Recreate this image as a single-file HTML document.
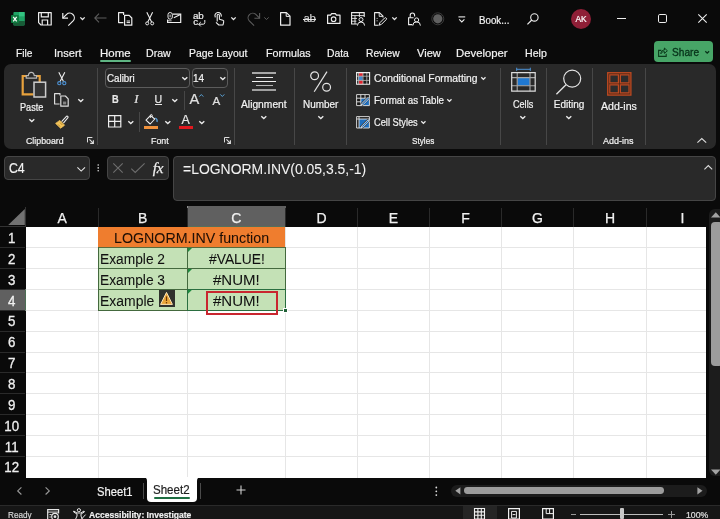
<!DOCTYPE html>
<html>
<head>
<meta charset="utf-8">
<title>Excel</title>
<style>
*{box-sizing:border-box;margin:0;padding:0}
html,body{width:720px;height:519px;overflow:hidden;background:#0a0a0a}
body{font-family:"Liberation Sans",sans-serif;color:#fff;position:relative}
.abs{position:absolute}
.t{position:absolute;white-space:nowrap;line-height:1;color:#f2f2f2;transform-origin:0 0;-webkit-text-stroke:0.2px currentColor}
#ribbon{position:absolute;left:4.1px;top:63.8px;width:711.8px;height:84.8px;background:#292929;border-radius:7px}
.sep{position:absolute;width:1px;background:#474747;top:68px;height:77px}
.box{position:absolute;background:#292929;border:1px solid #454545;border-radius:4px}
#grid{position:absolute;left:26px;top:227px;width:680px;height:250.5px;background:#fff;overflow:hidden}
.hl{position:absolute;left:0;width:680px;height:1px;background:#e6e6e6}
.vl{position:absolute;top:0;height:251px;width:1px;background:#e6e6e6}
.ch{position:absolute;top:207px;height:20px;color:#f0f0f0;font-size:14px;text-align:center;line-height:22px;-webkit-text-stroke:0.25px #f0f0f0}
.rh{position:absolute;left:0;width:23.4px;color:#f0f0f0;font-size:14.3px;text-align:center;line-height:22.4px;height:21px;transform:scaleX(0.93);-webkit-text-stroke:0.3px #f0f0f0}
.cell{position:absolute;font-size:13.5px;color:#111;line-height:21px;white-space:nowrap}
svg{position:absolute;overflow:visible}
</style>
</head>
<body>
<div id="app" style="position:absolute;left:0;top:0;width:720px;height:519px;will-change:transform">
<!-- TITLE BAR -->
<!-- excel logo -->
<svg style="left:11px;top:11.9px" width="14" height="14" viewBox="0 0 14 14">
<rect x="2.4" y="0" width="11.2" height="13.5" rx="0.9" fill="#21a366"/>
<rect x="8" y="0" width="5.6" height="4.6" fill="#33c481"/>
<rect x="2.4" y="4.6" width="5.6" height="4.4" fill="#107c41"/>
<rect x="8" y="4.6" width="5.6" height="4.4" fill="#21a366"/>
<rect x="2.4" y="9" width="11.2" height="4.5" rx="0.9" fill="#185c37"/>
<rect x="0" y="3" width="7.9" height="8" rx="0.8" fill="#107c41"/>
<path d="M2.2 4.8 L5.7 9.3 M5.7 4.8 L2.2 9.3" stroke="#fff" stroke-width="1.2"/>
</svg>
<!-- save -->
<svg style="left:38px;top:12.2px" width="14" height="14" viewBox="0 0 14 14"><path d="M0.6 0.6H13.2V13H3L0.6 10.6Z" fill="none" stroke="#eee" stroke-width="1.2" stroke-linejoin="round"/><path d="M3.3 0.6V4.9H10.3V0.6" fill="none" stroke="#eee" stroke-width="1.2"/><path d="M4.2 13V8H9.6V13" fill="none" stroke="#eee" stroke-width="1.2"/></svg>
<!-- undo -->
<svg style="left:62.3px;top:11.8px" width="14" height="14" viewBox="0 0 14 14"><path d="M0.8 1V6.2H6" fill="none" stroke="#eee" stroke-width="1.2"/><path d="M0.8 6.2 L4.6 2.4 A4.6 4.6 0 0 1 11.1 8.9 L6.3 13.6" fill="none" stroke="#eee" stroke-width="1.2"/></svg>
<svg style="left:80px;top:17px" width="5" height="3" viewBox="0 0 5 3"><path d="M0.3 0.4 L2.5 2.5 L4.7 0.4" fill="none" stroke="#e6e6e6" stroke-width="1.3"/></svg>
<!-- back arrow (disabled) -->
<svg style="left:94.4px;top:13.4px" width="13" height="10" viewBox="0 0 13 10"><path d="M12.5 5H0.8 M5 0.7 L0.8 5 L5 9.3" fill="none" stroke="#5c5c5c" stroke-width="1.1"/></svg>
<!-- copy -->
<svg style="left:118px;top:12px" width="15" height="14" viewBox="0 0 15 14"><path d="M5.4 10.6H0.6V0.6H5.6V3" fill="none" stroke="#eee" stroke-width="1.2" stroke-linejoin="round"/><path d="M6.6 3.4H11.2L13.8 6V13.2H6.6Z" fill="none" stroke="#eee" stroke-width="1.2" stroke-linejoin="round"/><path d="M8.6 9H12 M8.6 10.6H12" stroke="#eee" stroke-width="1"/></svg>
<!-- cut -->
<svg style="left:145px;top:12.4px" width="10" height="14" viewBox="0 0 10 14"><path d="M1.8 0.3 L6.6 10 M7.6 0.3 L2.8 10" stroke="#eee" stroke-width="1.1"/><circle cx="2.2" cy="11.4" r="1.5" fill="none" stroke="#eee" stroke-width="1"/><circle cx="7.2" cy="11.4" r="1.5" fill="none" stroke="#eee" stroke-width="1"/></svg>
<!-- email -->
<svg style="left:166.8px;top:12px" width="15" height="11" viewBox="0 0 15 11"><path d="M5.6 2.2H13.7V10.5H0.6V7.4" fill="none" stroke="#eee" stroke-width="1.2"/><path d="M6.8 5.8 L13.4 2.6" stroke="#eee" stroke-width="1.1"/><rect x="1" y="0.5" width="4.3" height="6.7" rx="2.1" fill="none" stroke="#eee" stroke-width="1"/><path d="M3.1 2.6V5.2" stroke="#eee" stroke-width="0.9"/><path d="M0.6 8.8H4.6" stroke="#eee" stroke-width="0.8"/></svg>
<!-- replace abc -->
<span class="t" style="left:193px;top:11.4px;font-size:9.8px;color:#eee;letter-spacing:-0.2px">ab</span>
<span class="t" style="left:193.3px;top:17.4px;font-size:9.8px;color:#eee">c</span>
<svg style="left:198px;top:19.5px" width="8" height="7" viewBox="0 0 8 7"><path d="M6.8 0V2.6A1.6 1.6 0 0 1 5.2 4.2H0.8 M2.8 2 L0.6 4.2 L2.8 6.4" fill="none" stroke="#eee" stroke-width="1"/></svg>
<!-- touch -->
<svg style="left:213.6px;top:12px" width="11" height="14" viewBox="0 0 11 14"><path d="M3.2 9.6V3.4A1.1 1.1 0 0 1 5.4 3.4V7.2L8.8 8.2A1.4 1.4 0 0 1 9.7 9.8L9 13H4.8L2 10.4" fill="none" stroke="#eee" stroke-width="1.1" stroke-linejoin="round"/><path d="M1.4 5.4A3.2 3.2 0 1 1 7.2 4.6" fill="none" stroke="#eee" stroke-width="1.1"/></svg>
<svg style="left:231.3px;top:17px" width="5" height="3" viewBox="0 0 5 3"><path d="M0.3 0.4 L2.5 2.5 L4.7 0.4" fill="none" stroke="#e6e6e6" stroke-width="1.3"/></svg>
<!-- redo (disabled) -->
<svg style="left:246.6px;top:11.8px" width="14" height="14" viewBox="0 0 14 14"><path d="M12.6 1V6.2H7.4" fill="none" stroke="#5c5c5c" stroke-width="1.1"/><path d="M12.6 6.2 L8.8 2.4 A4.6 4.6 0 0 0 2.3 8.9 L7.1 13.6" fill="none" stroke="#5c5c5c" stroke-width="1.1"/></svg>
<svg style="left:264.4px;top:17px" width="5" height="3" viewBox="0 0 5 3"><path d="M0.3 0.4 L2.5 2.5 L4.7 0.4" fill="none" stroke="#5c5c5c" stroke-width="1"/></svg>
<!-- new doc -->
<svg style="left:280px;top:12px" width="11" height="14" viewBox="0 0 11 14"><path d="M0.6 0.6H6.4L10 4.2V13.2H0.6Z" fill="none" stroke="#eee" stroke-width="1.2" stroke-linejoin="round"/><path d="M6.2 0.8V4.4H9.8" fill="none" stroke="#eee" stroke-width="1"/></svg>
<!-- strikethrough ab -->
<span class="t" style="left:303.6px;top:12.6px;font-size:11.4px;color:#cfcfcf;letter-spacing:-0.4px">ab</span>
<div class="abs" style="left:302.5px;top:19.3px;width:13.2px;height:1px;background:#e6e6e6"></div>
<!-- camera -->
<svg style="left:326.5px;top:12.8px" width="14" height="11" viewBox="0 0 14 11"><path d="M0.6 2.2H3.6L4.6 0.7H8.4L9.4 2.2H13V10.4H0.6Z" fill="none" stroke="#eee" stroke-width="1.2" stroke-linejoin="round"/><circle cx="6.6" cy="6.2" r="2.3" fill="none" stroke="#eee" stroke-width="1.1"/></svg>
<!-- table person -->
<svg style="left:351px;top:12px" width="14" height="14" viewBox="0 0 14 14"><path d="M6 12H0.6V0.6H13.2V5" fill="none" stroke="#eee" stroke-width="1.1"/><path d="M0.6 3.6H13.2 M0.6 6.4H6 M0.6 9.2H5.4 M4 3.6V12 M8.4 0.6V5" stroke="#eee" stroke-width="0.9"/><circle cx="10" cy="7.6" r="2" fill="none" stroke="#eee" stroke-width="1"/><path d="M6.4 13.6A3.6 3.6 0 0 1 13.6 13.6" fill="none" stroke="#eee" stroke-width="1"/></svg>
<!-- doc pen -->
<svg style="left:374px;top:12px" width="13" height="14" viewBox="0 0 13 14"><path d="M4.6 13.2H0.6V0.6H5.4L9 4.2V5.4" fill="none" stroke="#eee" stroke-width="1.1" stroke-linejoin="round"/><path d="M5.2 0.8V4.4H8.8" fill="none" stroke="#eee" stroke-width="0.9"/><path d="M5.2 13.2 L5.8 10.8 L10.6 6 A1 1 0 0 1 12.2 7.6 L7.4 12.4 Z" fill="none" stroke="#eee" stroke-width="1" stroke-linejoin="round"/><path d="M2.6 6.4H3.6 M2.6 8.8H3.6" stroke="#eee" stroke-width="0.9"/></svg>
<svg style="left:391.5px;top:17px" width="5" height="3" viewBox="0 0 5 3"><path d="M0.3 0.4 L2.5 2.5 L4.7 0.4" fill="none" stroke="#e6e6e6" stroke-width="1.3"/></svg>
<!-- lock person -->
<svg style="left:407.7px;top:12px" width="13" height="14" viewBox="0 0 13 14"><path d="M4.4 12.6H0.6V5.8H5.6" fill="none" stroke="#eee" stroke-width="1.1"/><path d="M2.2 5.8V3.2A2.2 2.2 0 0 1 6.6 3.2V4.6" fill="none" stroke="#eee" stroke-width="1.1"/><circle cx="8.6" cy="8" r="2.1" fill="none" stroke="#eee" stroke-width="1"/><path d="M4.8 13.6A3.8 3.8 0 0 1 12.4 13.6" fill="none" stroke="#eee" stroke-width="1"/></svg>
<!-- gray record circle -->
<svg style="left:430.5px;top:12px" width="14" height="14" viewBox="0 0 14 14"><circle cx="6.8" cy="6.8" r="6" fill="none" stroke="#3b3b3b" stroke-width="1"/><circle cx="6.8" cy="6.8" r="4.6" fill="#606060"/></svg>
<!-- customize QAT -->
<svg style="left:458px;top:15.6px" width="8" height="7" viewBox="0 0 8 7"><path d="M0.4 0.9H7.2" stroke="#eee" stroke-width="1.1"/><path d="M1.2 3.4 L3.8 5.9 L6.4 3.4" fill="none" stroke="#eee" stroke-width="1.1"/></svg>
<!-- search -->
<svg style="left:527.4px;top:13.3px" width="12" height="12" viewBox="0 0 12 12"><circle cx="7.4" cy="4.4" r="3.7" fill="none" stroke="#eee" stroke-width="1.1"/><path d="M4.8 7 L0.4 11.4" stroke="#eee" stroke-width="1.2"/></svg>
<!-- avatar -->
<div class="abs" style="left:571px;top:9px;width:20px;height:20px;border-radius:10px;background:#8f1f37"></div>
<span class="t" style="left:575.4px;top:15.2px;font-size:8.4px;color:#fff">AK</span>
<!-- window controls -->
<div class="abs" style="left:617.3px;top:18.3px;width:9px;height:1px;background:#eee"></div>
<div class="abs" style="left:657.8px;top:14.4px;width:9px;height:8.8px;border:1.1px solid #eee;border-radius:1.8px"></div>
<svg style="left:698.2px;top:14.3px" width="9" height="9" viewBox="0 0 9 9"><path d="M0.3 0.3 L8.7 8.7 M8.7 0.3 L0.3 8.7" stroke="#eee" stroke-width="1.1"/></svg>

<!-- TABS -->
<div class="abs" style="left:99.5px;top:60.2px;width:31px;height:1.6px;background:#5fb583;border-radius:1px"></div>
<div class="abs" style="left:654.2px;top:41px;width:59px;height:21px;background:#47a567;border-radius:4px"></div>
<!-- RIBBON -->
<div id="ribbon"></div>
<div class="sep" style="left:96.5px"></div>
<div class="sep" style="left:233.6px"></div>
<div class="sep" style="left:293.9px"></div>
<div class="sep" style="left:345.5px"></div>
<div class="sep" style="left:499.5px"></div>
<div class="sep" style="left:546.2px"></div>
<div class="sep" style="left:591.7px"></div>
<div class="sep" style="left:644.5px"></div>
<!-- paste -->
<svg style="left:21px;top:71px" width="26" height="27" viewBox="0 0 26 27">
<path d="M12.4 23.4H1.7V5H18.7V11" fill="none" stroke="#e8a23d" stroke-width="2.2"/>
<path d="M5.2 7.2V4.6H7.4C7.6 0.2 13 0.2 13.2 4.6H15.6V7.2Z" fill="#292929" stroke="#b8b8b8" stroke-width="1.2" stroke-linejoin="round"/>
<rect x="13" y="11.2" width="11.6" height="14.8" fill="#333" stroke="#cdcdcd" stroke-width="1.5"/>
</svg>
<svg style="left:28.7px;top:118.9px" width="6" height="3" viewBox="0 0 6 3"><path d="M0.3 0.3 L2.8 2.6 L5.3 0.3" fill="none" stroke="#ececec" stroke-width="1.35"/></svg>
<!-- cut -->
<svg style="left:56.6px;top:71.7px" width="10" height="14" viewBox="0 0 10 14"><path d="M1.8 0.3 L6.5 9.6 M7.8 0.3 L3.1 9.6" stroke="#eee" stroke-width="1.1"/><circle cx="2.3" cy="11.2" r="1.6" fill="none" stroke="#4d93d6" stroke-width="1.1"/><circle cx="7.3" cy="11.2" r="1.6" fill="none" stroke="#4d93d6" stroke-width="1.1"/></svg>
<!-- copy -->
<svg style="left:53.7px;top:93px" width="15" height="14" viewBox="0 0 15 14"><path d="M5.6 11H0.6V0.6H6V2.4" fill="none" stroke="#ddd" stroke-width="1.2" stroke-linejoin="round"/><path d="M6.8 3H11.4L14.2 5.8V13.2H6.8Z" fill="none" stroke="#ddd" stroke-width="1.2" stroke-linejoin="round"/><path d="M9 9.2H12.2 M9 10.8H12.2" stroke="#aaa" stroke-width="1"/></svg>
<svg style="left:78.2px;top:98.9px" width="6" height="3" viewBox="0 0 6 3"><path d="M0.3 0.3 L2.8 2.6 L5.3 0.3" fill="none" stroke="#ececec" stroke-width="1.35"/></svg>
<!-- format painter -->
<svg style="left:54.7px;top:115px" width="14" height="14" viewBox="0 0 14 14"><path d="M6.6 6.6 L11.6 1.2 A1.1 1.1 0 0 1 13 2.6 L8.4 8.2" fill="none" stroke="#eee" stroke-width="1.1"/><path d="M4.8 5.4 L9.6 10.2 L5.6 13.2 L0.6 8.4 Z" fill="#f2c35a" stroke="#f2c35a" stroke-width="0.8" stroke-linejoin="round"/><path d="M3 9.4 L5.2 11.6 M5 7.6 L7.4 10" stroke="#a87818" stroke-width="0.7"/></svg>
<!-- dialog launchers -->
<svg style="left:87.4px;top:137.2px" width="7" height="7" viewBox="0 0 7 7"><path d="M0.5 5.4V0.5H5.4" fill="none" stroke="#ddd" stroke-width="1"/><path d="M2.4 2.4 L6.2 6.2 M6.4 3.2V6.4H3.2" fill="none" stroke="#ddd" stroke-width="1.1"/></svg>
<svg style="left:224.2px;top:137.2px" width="7" height="7" viewBox="0 0 7 7"><path d="M0.5 5.4V0.5H5.4" fill="none" stroke="#ddd" stroke-width="1"/><path d="M2.4 2.4 L6.2 6.2 M6.4 3.2V6.4H3.2" fill="none" stroke="#ddd" stroke-width="1.1"/></svg>
<!-- font boxes -->
<div class="abs" style="left:104.5px;top:68.2px;width:85.2px;height:19.6px;border:1px solid #5c5c5c;border-radius:4px;background:#272727"></div>
<div class="abs" style="left:191.6px;top:68.2px;width:36.6px;height:19.6px;border:1px solid #5c5c5c;border-radius:4px;background:#272727"></div>
<svg style="left:182px;top:77.3px" width="6" height="3" viewBox="0 0 6 3"><path d="M0.3 0.3 L2.8 2.6 L5.3 0.3" fill="none" stroke="#ececec" stroke-width="1.35"/></svg>
<svg style="left:219.8px;top:77.3px" width="6" height="3" viewBox="0 0 6 3"><path d="M0.3 0.3 L2.8 2.6 L5.3 0.3" fill="none" stroke="#ececec" stroke-width="1.35"/></svg>
<!-- B I U -->
<span class="t" style="left:112.2px;top:93.7px;font-size:11px;font-weight:700;color:#e8e8e8;transform:scaleX(0.84)">B</span>
<span class="t" style="left:134.2px;top:92.6px;font-size:12.6px;font-style:italic;font-family:'Liberation Serif',serif;color:#e8e8e8">I</span>
<span class="t" style="left:154.5px;top:93.7px;font-size:10.6px;color:#e8e8e8">U</span>
<div class="abs" style="left:154.5px;top:104px;width:7.6px;height:1px;background:#e8e8e8"></div>
<svg style="left:172px;top:99px" width="6" height="3" viewBox="0 0 6 3"><path d="M0.3 0.3 L2.8 2.6 L5.3 0.3" fill="none" stroke="#ececec" stroke-width="1.35"/></svg>
<div class="abs" style="left:183.6px;top:90.5px;width:1px;height:19px;background:#474747"></div>
<!-- grow / shrink font -->
<span class="t" style="left:189.4px;top:92.2px;font-size:14.6px;color:#e0e0e0">A</span>
<svg style="left:199px;top:94px" width="5" height="3" viewBox="0 0 5 3"><path d="M0.3 2.6 L2.3 0.5 L4.3 2.6" fill="none" stroke="#5aa2d6" stroke-width="1"/></svg>
<span class="t" style="left:212.6px;top:94.8px;font-size:11.6px;color:#e0e0e0">A</span>
<svg style="left:220.4px;top:94px" width="5" height="3" viewBox="0 0 5 3"><path d="M0.3 0.4 L2.3 2.5 L4.3 0.4" fill="none" stroke="#5aa2d6" stroke-width="1"/></svg>
<!-- borders -->
<svg style="left:108px;top:115.4px" width="14" height="13" viewBox="0 0 14 13"><path d="M0.6 0.6H12.8V12H0.6Z M6.7 0.6V12 M0.6 6.3H12.8" fill="none" stroke="#eee" stroke-width="1.2"/></svg>
<svg style="left:128px;top:121px" width="6" height="3" viewBox="0 0 6 3"><path d="M0.3 0.3 L2.8 2.6 L5.3 0.3" fill="none" stroke="#ececec" stroke-width="1.35"/></svg>
<div class="abs" style="left:139.3px;top:112px;width:1px;height:20px;background:#474747"></div>
<!-- fill color -->
<svg style="left:145.4px;top:114.4px" width="14" height="11" viewBox="0 0 14 11"><path d="M5.4 1.6 L9.8 5 L5.2 10 L1 6.2 Z" fill="none" stroke="#eee" stroke-width="1.1" stroke-linejoin="round"/><path d="M5.4 4 V1 A1 1 0 0 1 7.2 1 V3" fill="none" stroke="#eee" stroke-width="0.9"/><path d="M10.2 4 C11.8 4.6 12.4 6.2 12 8" fill="none" stroke="#5a9fd8" stroke-width="1.3"/></svg>
<div class="abs" style="left:144.2px;top:125.6px;width:14.1px;height:3.1px;background:#f0923c"></div>
<svg style="left:164.6px;top:121px" width="6" height="3" viewBox="0 0 6 3"><path d="M0.3 0.3 L2.8 2.6 L5.3 0.3" fill="none" stroke="#ececec" stroke-width="1.35"/></svg>
<!-- font color -->
<span class="t" style="left:181.5px;top:113.7px;font-size:12.4px;color:#e8e8e8">A</span>
<div class="abs" style="left:178.9px;top:125.6px;width:14.1px;height:3.1px;background:#e0191f"></div>
<svg style="left:199px;top:121px" width="6" height="3" viewBox="0 0 6 3"><path d="M0.3 0.3 L2.8 2.6 L5.3 0.3" fill="none" stroke="#ececec" stroke-width="1.35"/></svg>
<!-- alignment icon -->
<div class="abs" style="left:252px;top:72.2px;width:24.2px;height:1.4px;background:#a8a8a8"></div>
<div class="abs" style="left:255.6px;top:76.9px;width:17.2px;height:1.2px;background:#e8e8e8"></div>
<div class="abs" style="left:252px;top:80.8px;width:24.2px;height:1.2px;background:#f0f0f0"></div>
<div class="abs" style="left:255.6px;top:85.2px;width:17.2px;height:1.3px;background:#b4b4b4"></div>
<div class="abs" style="left:252px;top:89.3px;width:24.2px;height:1.5px;background:#a0a0a0"></div>
<svg style="left:261px;top:116px" width="6" height="3" viewBox="0 0 6 3"><path d="M0.3 0.3 L2.8 2.6 L5.3 0.3" fill="none" stroke="#ececec" stroke-width="1.35"/></svg>
<!-- number icon (percent) -->
<svg style="left:310px;top:71.4px" width="22" height="22" viewBox="0 0 22 22"><circle cx="4.6" cy="4.8" r="3.9" fill="none" stroke="#e4e4e4" stroke-width="1.2"/><circle cx="16.6" cy="16.2" r="3.9" fill="none" stroke="#e4e4e4" stroke-width="1.2"/><path d="M17 0.6 L4.2 20.8" stroke="#e4e4e4" stroke-width="1.2"/></svg>
<svg style="left:318px;top:116px" width="6" height="3" viewBox="0 0 6 3"><path d="M0.3 0.3 L2.8 2.6 L5.3 0.3" fill="none" stroke="#ececec" stroke-width="1.35"/></svg>
<!-- conditional formatting icon -->
<svg style="left:356px;top:71.6px" width="14" height="13" viewBox="0 0 14 13"><rect x="0.6" y="0.6" width="13" height="11.6" fill="#1c1c1c"/><rect x="3" y="0.6" width="4" height="3.6" fill="#e0232d"/><rect x="2.4" y="4.2" width="4.2" height="4.2" fill="#3f86cf"/><rect x="3" y="8.4" width="4" height="3.8" fill="#e0232d"/><path d="M2.6 0.6V12.2 M7 0.6V12.2 M10.8 0.6V12.2 M0.6 4.2H13.6 M0.6 8.4H13.6" fill="none" stroke="#bdbdbd" stroke-width="0.8"/><path d="M0.6 0.6H13.6V12.2H0.6Z" fill="none" stroke="#f0f0f0" stroke-width="1.1"/></svg>
<svg style="left:481px;top:76.9px" width="5" height="3" viewBox="0 0 5 3"><path d="M0.3 0.3 L2.4 2.4 L4.5 0.3" fill="none" stroke="#ececec" stroke-width="1.3"/></svg>
<!-- format as table icon -->
<svg style="left:356px;top:94.3px" width="14" height="12" viewBox="0 0 14 12"><rect x="0.6" y="0.6" width="12.8" height="11" fill="#1a1a1a"/><rect x="4.8" y="4.2" width="8.6" height="7.4" fill="#1f6fbf"/><path d="M0.6 0.6H13.4V11.6H0.6Z M4.8 0.6V11.6 M9 0.6V4.2 M0.6 4.2H13.4 M0.6 7.8H4.8" fill="none" stroke="#e4e4e4" stroke-width="0.9"/><path d="M5.2 11.2 L12.8 3.6" stroke="#2a2a2a" stroke-width="3.2"/><path d="M5 11.4 L6 9.4 L12 3.4 L13.2 4.6 L7.2 10.6 Z" fill="#1f6fbf" stroke="#f0f0f0" stroke-width="0.8" stroke-linejoin="round"/></svg>
<svg style="left:447.3px;top:98.7px" width="5" height="3" viewBox="0 0 5 3"><path d="M0.3 0.3 L2.4 2.4 L4.5 0.3" fill="none" stroke="#ececec" stroke-width="1.3"/></svg>
<!-- cell styles icon -->
<svg style="left:356px;top:116px" width="14" height="13" viewBox="0 0 14 13"><rect x="0.6" y="0.6" width="12.8" height="11.4" fill="#1a1a1a"/><rect x="3" y="3" width="10.4" height="9" fill="#1f6fbf"/><path d="M0.6 0.6H13.4V12H0.6Z M0.6 3H13.4 M3 0.6V12" fill="none" stroke="#e4e4e4" stroke-width="0.9"/><path d="M5.2 11.6 L12.8 4" stroke="#2a2a2a" stroke-width="3.2"/><path d="M5 11.8 L6 9.8 L12 3.8 L13.2 5 L7.2 11 Z" fill="#1f6fbf" stroke="#f0f0f0" stroke-width="0.8" stroke-linejoin="round"/></svg>
<svg style="left:420.6px;top:120.8px" width="5" height="3" viewBox="0 0 5 3"><path d="M0.3 0.3 L2.4 2.4 L4.5 0.3" fill="none" stroke="#ececec" stroke-width="1.3"/></svg>
<!-- cells icon -->
<svg style="left:511px;top:68px" width="25" height="25" viewBox="0 0 25 25"><rect x="6.4" y="9.8" width="12.4" height="7.8" fill="#1f78d1"/><path d="M6.2 4.7V23.2 M19 4.7V23.2 M0.7 9.6H24.2 M0.7 17.7H24.2" fill="none" stroke="#a8a8a8" stroke-width="1.1"/><path d="M0.7 4.7H24.2V23.2H0.7Z" fill="none" stroke="#dcdcdc" stroke-width="1.2"/><path d="M5.7 1.3H19.3 M5.7 -0.3V2.9 M19.3 -0.3V2.9" stroke="#4d93d6" stroke-width="1"/></svg>
<svg style="left:520.4px;top:115.6px" width="6" height="3" viewBox="0 0 6 3"><path d="M0.3 0.3 L2.8 2.6 L5.3 0.3" fill="none" stroke="#ececec" stroke-width="1.35"/></svg>
<!-- editing icon -->
<svg style="left:556px;top:69.4px" width="26" height="26" viewBox="0 0 26 26"><circle cx="16.2" cy="9.6" r="8.5" fill="none" stroke="#e4e4e4" stroke-width="1.2"/><path d="M10 15.8 L0.4 25.2" stroke="#e4e4e4" stroke-width="1.3"/></svg>
<svg style="left:566px;top:115.6px" width="6" height="3" viewBox="0 0 6 3"><path d="M0.3 0.3 L2.8 2.6 L5.3 0.3" fill="none" stroke="#ececec" stroke-width="1.35"/></svg>
<!-- add-ins icon -->
<svg style="left:606.7px;top:72px" width="25" height="24" viewBox="0 0 25 24"><rect x="0.7" y="0.7" width="23.2" height="22.4" fill="#4f2616" stroke="#bd4a22" stroke-width="1.3"/><path d="M2.8 2.8H11.4V10.8H2.8Z M13.4 2.8H22V10.8H13.4Z M2.8 12.8H11.4V20.9H2.8Z M13.4 12.8H22V20.9H13.4Z" fill="#2c2c2c" stroke="#bd4a22" stroke-width="1.2"/></svg>
<!-- collapse ribbon chevron -->
<svg style="left:697.4px;top:138.4px" width="10" height="5" viewBox="0 0 10 5"><path d="M0.4 4.6 L4.8 0.5 L9.2 4.6" fill="none" stroke="#ddd" stroke-width="1.1"/></svg>
<!-- share icon + chevron -->
<svg style="left:658.3px;top:46.6px" width="10" height="10" viewBox="0 0 10 10"><path d="M3.4 3.4H0.6V9.4H8.2V6.8" fill="none" stroke="#0b3d1c" stroke-width="1.1"/><path d="M2.8 6.8C3 4.4 4.6 3 6.4 3V1L9.4 3.8L6.4 6.4V4.6C5 4.6 3.8 5.2 2.8 6.8Z" fill="none" stroke="#0b3d1c" stroke-width="1" stroke-linejoin="round"/></svg>
<svg style="left:705px;top:50.5px" width="5" height="3" viewBox="0 0 5 3"><path d="M0.3 0.3 L2.2 2.2 L4.1 0.3" fill="none" stroke="#07331a" stroke-width="1.3"/></svg>

<!-- FORMULA BAR -->
<div class="box" style="left:4px;top:156px;width:86px;height:24px"></div>
<div class="box" style="left:107px;top:156px;width:62px;height:24px"></div>
<div class="box" style="left:172.5px;top:156px;width:543.5px;height:45px"></div>
<svg style="left:77px;top:166.6px" width="9" height="5" viewBox="0 0 9 5"><path d="M0.4 0.4 L4.2 4.1 L8 0.4" fill="none" stroke="#e6e6e6" stroke-width="1.1"/></svg>
<svg style="left:97.2px;top:164.4px" width="3" height="8" viewBox="0 0 3 8"><circle cx="1.2" cy="1" r="0.8" fill="#ddd"/><circle cx="1.2" cy="3.9" r="0.8" fill="#ddd"/><circle cx="1.2" cy="6.8" r="0.8" fill="#ddd"/></svg>
<svg style="left:112.5px;top:163px" width="10" height="10" viewBox="0 0 10 10"><path d="M0.3 0.3 L9.7 9.7 M9.7 0.3 L0.3 9.7" stroke="#6e6e6e" stroke-width="1.1"/></svg>
<svg style="left:130.8px;top:163px" width="14" height="10" viewBox="0 0 14 10"><path d="M0.3 5.6 L4.2 9.4 L13.6 0.4" fill="none" stroke="#6e6e6e" stroke-width="1.1"/></svg>
<span class="t" style="left:152.8px;top:160.3px;font-size:15.2px;font-style:italic;font-weight:400;font-family:'Liberation Serif',serif;color:#f0f0f0;letter-spacing:-0.2px;-webkit-text-stroke:0.25px #f0f0f0">fx</span>
<svg style="left:704px;top:164.6px" width="9" height="5" viewBox="0 0 9 5"><path d="M0.4 4.4 L4.3 0.5 L8.2 4.4" fill="none" stroke="#ddd" stroke-width="1.1"/></svg>

<!-- GRID -->
<div class="abs" style="left:0;top:206px;width:706px;height:21px;background:#0a0a0a"></div>
<svg style="left:7.5px;top:209.2px" width="17" height="16" viewBox="0 0 17 16"><path d="M16.8 0 L16.8 16 L0.2 16 Z" fill="#727272"/></svg>
<div class="abs" style="left:187px;top:206.4px;width:98.6px;height:20.4px;background:#606060;border-bottom:0.8px solid #56705a;border-left:1px solid #8c8c8c"></div>
<div class="abs" style="left:0;top:289.15px;width:25.7px;height:21.45px;background:#606060;border-right:0.9px solid #4c6e54;border-top:1px solid #7c7c7c;border-bottom:1px solid #9a9a9a"></div>
<div class="ch" style="left:26px;width:72.5px">A</div>
<div class="ch" style="left:98.5px;width:88.5px">B</div>
<div class="ch" style="left:187px;width:98.5px">C</div>
<div class="ch" style="left:285.5px;width:72.0px">D</div>
<div class="ch" style="left:357.5px;width:72.0px">E</div>
<div class="ch" style="left:429.5px;width:72.0px">F</div>
<div class="ch" style="left:501.5px;width:72.0px">G</div>
<div class="ch" style="left:573.5px;width:73.0px">H</div>
<div class="ch" style="left:646.5px;width:72.0px">I</div>
<div class="abs" style="left:98.0px;top:208px;width:1px;height:19px;background:#2a2a2a"></div>
<div class="abs" style="left:186.5px;top:208px;width:1px;height:19px;background:#2a2a2a"></div>
<div class="abs" style="left:285.0px;top:208px;width:1px;height:19px;background:#2a2a2a"></div>
<div class="abs" style="left:357.0px;top:208px;width:1px;height:19px;background:#2a2a2a"></div>
<div class="abs" style="left:429.0px;top:208px;width:1px;height:19px;background:#2a2a2a"></div>
<div class="abs" style="left:501.0px;top:208px;width:1px;height:19px;background:#2a2a2a"></div>
<div class="abs" style="left:573.0px;top:208px;width:1px;height:19px;background:#2a2a2a"></div>
<div class="abs" style="left:646.0px;top:208px;width:1px;height:19px;background:#2a2a2a"></div>
<div class="abs" style="left:25px;top:207px;width:1px;height:20px;background:#333"></div><div class="abs" style="left:0;top:226.3px;width:26px;height:1px;background:#333"></div>
<div id="grid">
<div class="hl" style="top:20.35px"></div>
<div class="hl" style="top:41.20px"></div>
<div class="hl" style="top:62.05px"></div>
<div class="hl" style="top:82.90px"></div>
<div class="hl" style="top:103.75px"></div>
<div class="hl" style="top:124.60px"></div>
<div class="hl" style="top:145.45px"></div>
<div class="hl" style="top:166.30px"></div>
<div class="hl" style="top:187.15px"></div>
<div class="hl" style="top:208.00px"></div>
<div class="hl" style="top:228.85px"></div>
<div class="vl" style="left:72.0px"></div>
<div class="vl" style="left:160.5px"></div>
<div class="vl" style="left:259.0px"></div>
<div class="vl" style="left:331.0px"></div>
<div class="vl" style="left:403.0px"></div>
<div class="vl" style="left:475.0px"></div>
<div class="vl" style="left:547.0px"></div>
<div class="vl" style="left:620.0px"></div>
</div>
<div class="rh" style="top:227.00px">1</div>
<div class="rh" style="top:247.85px">2</div>
<div class="abs" style="left:0;top:247.35px;width:25px;height:1px;background:#2a2a2a"></div>
<div class="rh" style="top:268.70px">3</div>
<div class="abs" style="left:0;top:268.20px;width:25px;height:1px;background:#2a2a2a"></div>
<div class="rh" style="top:289.55px">4</div>
<div class="abs" style="left:0;top:289.05px;width:25px;height:1px;background:#2a2a2a"></div>
<div class="rh" style="top:310.40px">5</div>
<div class="abs" style="left:0;top:309.90px;width:25px;height:1px;background:#2a2a2a"></div>
<div class="rh" style="top:331.25px">6</div>
<div class="abs" style="left:0;top:330.75px;width:25px;height:1px;background:#2a2a2a"></div>
<div class="rh" style="top:352.10px">7</div>
<div class="abs" style="left:0;top:351.60px;width:25px;height:1px;background:#2a2a2a"></div>
<div class="rh" style="top:372.95px">8</div>
<div class="abs" style="left:0;top:372.45px;width:25px;height:1px;background:#2a2a2a"></div>
<div class="rh" style="top:393.80px">9</div>
<div class="abs" style="left:0;top:393.30px;width:25px;height:1px;background:#2a2a2a"></div>
<div class="rh" style="top:414.65px">10</div>
<div class="abs" style="left:0;top:414.15px;width:25px;height:1px;background:#2a2a2a"></div>
<div class="rh" style="top:435.50px">11</div>
<div class="abs" style="left:0;top:435.00px;width:25px;height:1px;background:#2a2a2a"></div>
<div class="rh" style="top:456.35px">12</div>
<div class="abs" style="left:0;top:455.85px;width:25px;height:1px;background:#2a2a2a"></div>
<div class="abs" style="left:98px;top:227px;width:187.3px;height:21px;background:#ef7d2e"></div>
<div class="abs" style="left:98px;top:247.6px;width:187.6px;height:62.6px;background:#c4e1b6"></div>
<!-- cell borders (dark green) -->
<div class="abs" style="left:98px;top:247.4px;width:188px;height:1px;background:#5a6a3c"></div>
<div class="abs" style="left:98px;top:268.3px;width:188px;height:1px;background:#44693e"></div>
<div class="abs" style="left:98px;top:289.1px;width:188px;height:1px;background:#44693e"></div>
<div class="abs" style="left:98px;top:309.7px;width:89px;height:1px;background:#44693e"></div>
<div class="abs" style="left:97.8px;top:247.4px;width:1px;height:63px;background:#44693e"></div>
<div class="abs" style="left:186.9px;top:247.4px;width:1px;height:63px;background:#44693e"></div>
<div class="abs" style="left:285.2px;top:247.4px;width:1px;height:63px;background:#44693e"></div>
<!-- selection C4 -->
<div class="abs" style="left:186.6px;top:288.9px;width:99.4px;height:21.9px;border:1.2px solid #2a6e40"></div>
<div class="abs" style="left:282.8px;top:308px;width:3.4px;height:3.3px;background:#1f5f36;border:0.5px solid #fff;box-sizing:content-box"></div>
<!-- error indicators -->
<svg style="left:187.6px;top:248.3px" width="5" height="5" viewBox="0 0 5 5"><path d="M0 0H4L0 4Z" fill="#1d8a3e"/></svg>
<svg style="left:187.6px;top:269.1px" width="5" height="5" viewBox="0 0 5 5"><path d="M0 0H4L0 4Z" fill="#1d8a3e"/></svg>
<svg style="left:187.9px;top:290.3px" width="5" height="5" viewBox="0 0 5 5"><path d="M0 0H3.8L0 3.8Z" fill="#1d8a3e"/></svg>
<!-- warning icon -->
<div class="abs" style="left:159.2px;top:290px;width:15.9px;height:16.5px;background:#30322e"></div>
<svg style="left:159.2px;top:290px" width="16" height="16.5" viewBox="0 0 16 16.5"><path d="M7.5 2.4 L13.4 14.4 H1.6 Z" fill="#eaa53a" stroke="#fde4b8" stroke-width="1" stroke-linejoin="round"/><path d="M7.5 6.4V11" stroke="#6b3200" stroke-width="1.2"/><circle cx="7.5" cy="12.7" r="0.75" fill="#6b3200"/></svg>
<!-- red highlight box -->
<div class="abs" style="left:206px;top:290.8px;width:72.4px;height:23.9px;border:2.7px solid #c9262f"></div>

<!-- SHEET TABS + STATUS -->
<!-- vertical scrollbar -->
<div class="abs" style="left:706px;top:206px;width:14px;height:272px;background:#0a0a0a"></div>
<div class="abs" style="left:708.8px;top:209px;width:14px;height:267px;background:#1c1c1c;border-radius:6px 0 0 6px"></div>
<svg style="left:711px;top:211.5px" width="9" height="6" viewBox="0 0 9 6"><path d="M0 5.5 L4.8 0.3 L9 5 V5.5Z" fill="#a3a3a3"/></svg>
<div class="abs" style="left:711.3px;top:221.5px;width:12px;height:144.5px;background:#9c9c9c;border-radius:4px"></div>
<svg style="left:711px;top:469px" width="9" height="6" viewBox="0 0 9 6"><path d="M0 0.5 L4.8 5.7 L9 1 V0.5Z" fill="#a3a3a3"/></svg>
<!-- sheet tab bar -->
<div class="abs" style="left:0;top:477.5px;width:720px;height:27.5px;background:#0a0a0a"></div>
<svg style="left:17px;top:486.6px" width="40" height="8" viewBox="0 0 40 8"><path d="M4.4 0.3 L0.7 3.9 L4.4 7.5" fill="none" stroke="#9a9a9a" stroke-width="1.1"/><path d="M28.6 0.3 L32.3 3.9 L28.6 7.5" fill="none" stroke="#9a9a9a" stroke-width="1.1"/></svg>
<div class="abs" style="left:142.6px;top:483.2px;width:1px;height:15.6px;background:#4a4a4a"></div>
<div class="abs" style="left:146.6px;top:477.4px;width:50.7px;height:24.3px;background:#fff;border-radius:0 0 4px 4px"></div>
<svg style="left:142.6px;top:477.4px" width="4" height="4" viewBox="0 0 4 4"><path d="M0 0H4V4A4 4 0 0 0 0 0Z" fill="#fff"/></svg>
<svg style="left:197.3px;top:477.4px" width="4" height="4" viewBox="0 0 4 4"><path d="M4 0H0V4A4 4 0 0 1 4 0Z" fill="#fff"/></svg>
<div class="abs" style="left:154px;top:497.1px;width:36px;height:1.7px;background:#1e6e42;border-radius:1px"></div>
<div class="abs" style="left:199.8px;top:483.2px;width:1px;height:15.6px;background:#4a4a4a"></div>
<svg style="left:236px;top:485px" width="10" height="10" viewBox="0 0 10 10"><path d="M5 0.5V9.5M0.5 5H9.5" stroke="#d0d0d0" stroke-width="1.1"/></svg>
<!-- three dots + horizontal scrollbar -->
<svg style="left:435px;top:486px" width="3" height="11" viewBox="0 0 3 11"><circle cx="1.3" cy="1.5" r="0.9" fill="#ddd"/><circle cx="1.3" cy="5.3" r="0.9" fill="#ddd"/><circle cx="1.3" cy="9.1" r="0.9" fill="#ddd"/></svg>
<div class="abs" style="left:451px;top:484.8px;width:255.5px;height:12.6px;background:#1c1c1c;border-radius:6.5px"></div>
<div class="abs" style="left:464px;top:487.3px;width:200px;height:6.8px;background:#9c9c9c;border-radius:3.4px"></div>
<svg style="left:454.5px;top:487px" width="6" height="8" viewBox="0 0 6 8"><path d="M5.4 0.2V7.4L0.3 3.8Z" fill="#a3a3a3"/></svg>
<svg style="left:697px;top:487px" width="6" height="8" viewBox="0 0 6 8"><path d="M0.4 0.2V7.4L5.5 3.8Z" fill="#a3a3a3"/></svg>
<!-- status bar -->
<div class="abs" style="left:0;top:504.8px;width:720px;height:15px;background:#161616;border-top:1px solid #2a2a2a"></div>
<div class="abs" style="left:462.5px;top:505.6px;width:34.5px;height:15px;background:#252525"></div>
<!-- macro record icon -->
<svg style="left:46.8px;top:508.7px" width="13" height="12" viewBox="0 0 13 12"><path d="M0.7 11V0.7H11.6V4.6" fill="none" stroke="#e6e6e6" stroke-width="1.2"/><path d="M0.7 3.1H11.6" stroke="#e6e6e6" stroke-width="1"/><circle cx="8" cy="7.7" r="3.3" fill="none" stroke="#e6e6e6" stroke-width="1.2"/><circle cx="8" cy="7.7" r="1.4" fill="#e6e6e6"/><path d="M2.4 5.6H4.6M2.4 8H3.8" stroke="#e6e6e6" stroke-width="1"/></svg>
<!-- accessibility icon -->
<svg style="left:72.6px;top:508px" width="14" height="12" viewBox="0 0 14 12"><circle cx="5.9" cy="2.2" r="1.6" fill="none" stroke="#e6e6e6" stroke-width="1"/><path d="M0.8 3 L4 5 H7.8 L11 3 L11.4 4 L8 6 V8 L9.4 11.6 M4 6 V8 L2.4 11.6 M0.8 3 L0.6 4 L4 6" fill="none" stroke="#e6e6e6" stroke-width="1"/><path d="M12.6 6.6 L8.6 11" stroke="#e6e6e6" stroke-width="1"/></svg>
<!-- view buttons -->
<svg style="left:473.8px;top:508.3px" width="11" height="11" viewBox="0 0 11 11"><path d="M0.5 0.5H10.5V11H0.5Z M0.5 3.9H10.5 M0.5 7.3H10.5 M3.9 0.5V11 M7.3 0.5V11" fill="none" stroke="#f0f0f0" stroke-width="1.1"/></svg>
<svg style="left:507.8px;top:508.3px" width="12" height="11" viewBox="0 0 12 11"><path d="M0.6 0.6H11.4V11H0.6Z" fill="none" stroke="#f0f0f0" stroke-width="1.2"/><path d="M3.6 3.4H8.4V10H3.6Z M4.6 6.6H7.4" fill="none" stroke="#f0f0f0" stroke-width="1"/></svg>
<svg style="left:541.5px;top:508.3px" width="12" height="11" viewBox="0 0 12 11"><path d="M0.6 0.6H11.4V11H0.6Z" fill="none" stroke="#f0f0f0" stroke-width="1.2"/><path d="M4.2 0.6V5.6H11.4 M7.6 0.6V5.6" fill="none" stroke="#f0f0f0" stroke-width="1"/></svg>
<!-- zoom slider -->
<div class="abs" style="left:571px;top:513.6px;width:4.5px;height:1px;background:#9a9a9a"></div>
<div class="abs" style="left:580px;top:513.6px;width:83px;height:1px;background:#bdbdbd"></div>
<div class="abs" style="left:619.6px;top:508px;width:4px;height:11px;background:#c8c8c8;border-radius:1px"></div>
<svg style="left:668px;top:510.5px" width="7" height="7" viewBox="0 0 7 7"><path d="M3.5 0V7M0 3.5H7" stroke="#9a9a9a" stroke-width="1"/></svg>

<!-- TEXT LABELS -->
<span class="t" style="left:478.7px;top:14.61px;font-size:10.5px;color:#f3f3f3;transform:scaleX(0.9281)">Book...</span>
<span class="t" style="left:16.0px;top:47.73px;font-size:11.3px;color:#f3f3f3;transform:scaleX(0.9056)">File</span>
<span class="t" style="left:54.3px;top:47.73px;font-size:11.3px;color:#f3f3f3;transform:scaleX(0.9778)">Insert</span>
<span class="t" style="left:99.6px;top:47.73px;font-size:11.3px;color:#f3f3f3;transform:scaleX(1.0133)">Home</span>
<span class="t" style="left:146.3px;top:47.73px;font-size:11.3px;color:#f3f3f3;transform:scaleX(0.9407)">Draw</span>
<span class="t" style="left:188.5px;top:47.73px;font-size:11.3px;color:#f3f3f3;transform:scaleX(0.9219)">Page Layout</span>
<span class="t" style="left:265.9px;top:47.73px;font-size:11.3px;color:#f3f3f3;transform:scaleX(0.9489)">Formulas</span>
<span class="t" style="left:327.0px;top:47.73px;font-size:11.3px;color:#f3f3f3;transform:scaleX(0.9167)">Data</span>
<span class="t" style="left:365.9px;top:47.73px;font-size:11.3px;color:#f3f3f3;transform:scaleX(0.9081)">Review</span>
<span class="t" style="left:416.7px;top:47.73px;font-size:11.3px;color:#f3f3f3;transform:scaleX(0.9792)">View</span>
<span class="t" style="left:456.4px;top:47.73px;font-size:11.3px;color:#f3f3f3;transform:scaleX(1.0020)">Developer</span>
<span class="t" style="left:525.0px;top:47.73px;font-size:11.3px;color:#f3f3f3;transform:scaleX(0.9391)">Help</span>
<span class="t" style="left:672.2px;top:46.73px;font-size:11.3px;color:#07331a;-webkit-text-stroke:0.35px currentColor;transform:scaleX(0.8967)">Share</span>
<span class="t" style="left:20.4px;top:103.03px;font-size:10px;color:#f3f3f3;transform:scaleX(0.9120)">Paste</span>
<span class="t" style="left:26.2px;top:135.67px;font-size:9.6px;color:#f3f3f3;transform:scaleX(0.9171)">Clipboard</span>
<span class="t" style="left:106.6px;top:73.94px;font-size:10px;color:#f3f3f3;transform:scaleX(0.9786)">Calibri</span>
<span class="t" style="left:193.0px;top:74.03px;font-size:10px;color:#f3f3f3;transform:scaleX(1.0000)">14</span>
<span class="t" style="left:150.5px;top:135.67px;font-size:9.6px;color:#f3f3f3;transform:scaleX(0.9211)">Font</span>
<span class="t" style="left:241.2px;top:99.94px;font-size:10px;color:#f3f3f3;transform:scaleX(1.0267)">Alignment</span>
<span class="t" style="left:302.6px;top:99.94px;font-size:10px;color:#f3f3f3;transform:scaleX(0.9917)">Number</span>
<span class="t" style="left:373.8px;top:74.23px;font-size:10px;color:#f3f3f3;transform:scaleX(1.0290)">Conditional Formatting</span>
<span class="t" style="left:373.8px;top:96.03px;font-size:10px;color:#f3f3f3;transform:scaleX(0.9789)">Format as Table</span>
<span class="t" style="left:373.8px;top:118.23px;font-size:10px;color:#f3f3f3;transform:scaleX(0.9255)">Cell Styles</span>
<span class="t" style="left:411.6px;top:136.17px;font-size:9.6px;color:#f3f3f3;transform:scaleX(0.8538)">Styles</span>
<span class="t" style="left:513.3px;top:100.03px;font-size:10px;color:#f3f3f3;transform:scaleX(0.9091)">Cells</span>
<span class="t" style="left:553.8px;top:100.03px;font-size:10px;color:#f3f3f3;transform:scaleX(1.0000)">Editing</span>
<span class="t" style="left:601.0px;top:100.91px;font-size:10.5px;color:#f3f3f3;transform:scaleX(1.0057)">Add-ins</span>
<span class="t" style="left:603.3px;top:136.17px;font-size:9.6px;color:#f3f3f3;transform:scaleX(0.9375)">Add-ins</span>
<span class="t" style="left:8.7px;top:161.25px;font-size:14px;color:#f3f3f3;transform:scaleX(0.8778)">C4</span>
<span class="t" style="left:183.3px;top:162.05px;font-size:14px;color:#f3f3f3;-webkit-text-stroke:0.05px currentColor;transform:scaleX(0.9956)">=LOGNORM.INV(0.05,3.5,-1)</span>
<span class="t" style="left:113.8px;top:231.45px;font-size:14px;color:#1f0f05;-webkit-text-stroke:0.05px currentColor;transform:scaleX(1.0172)">LOGNORM.INV function</span>
<span class="t" style="left:100.2px;top:252.15px;font-size:14px;color:#111;-webkit-text-stroke:0.05px currentColor;transform:scaleX(0.9831)">Example 2</span>
<span class="t" style="left:100.2px;top:272.95px;font-size:14px;color:#111;-webkit-text-stroke:0.05px currentColor;transform:scaleX(0.9831)">Example 3</span>
<span class="t" style="left:100.2px;top:294.05px;font-size:14px;color:#111;-webkit-text-stroke:0.05px currentColor;transform:scaleX(0.9962)">Example</span>
<span class="t" style="left:208.7px;top:252.35px;font-size:14px;color:#111;-webkit-text-stroke:0.05px currentColor;transform:scaleX(0.9875)">#VALUE!</span>
<span class="t" style="left:213.0px;top:273.05px;font-size:14px;color:#111;-webkit-text-stroke:0.05px currentColor;transform:scaleX(1.0744)">#NUM!</span>
<span class="t" style="left:213.0px;top:294.25px;font-size:14px;color:#111;-webkit-text-stroke:0.05px currentColor;transform:scaleX(1.0744)">#NUM!</span>
<span class="t" style="left:97.0px;top:486.14px;font-size:12px;color:#f3f3f3;transform:scaleX(0.9351)">Sheet1</span>
<span class="t" style="left:153.0px;top:483.54px;font-size:12px;color:#1e1e1e;transform:scaleX(0.9622)">Sheet2</span>
<span class="t" style="left:7.9px;top:509.80px;font-size:9.8px;color:#d8d8d8;transform:scaleX(0.8357)">Ready</span>
<span class="t" style="left:88.7px;top:509.97px;font-size:9.6px;color:#f0f0f0;font-weight:700;transform:scaleX(0.8930)">Accessibility: Investigate</span>
<span class="t" style="left:685.6px;top:509.97px;font-size:9.6px;color:#e0e0e0;transform:scaleX(0.9125)">100%</span>
</div>
</body>
</html>
